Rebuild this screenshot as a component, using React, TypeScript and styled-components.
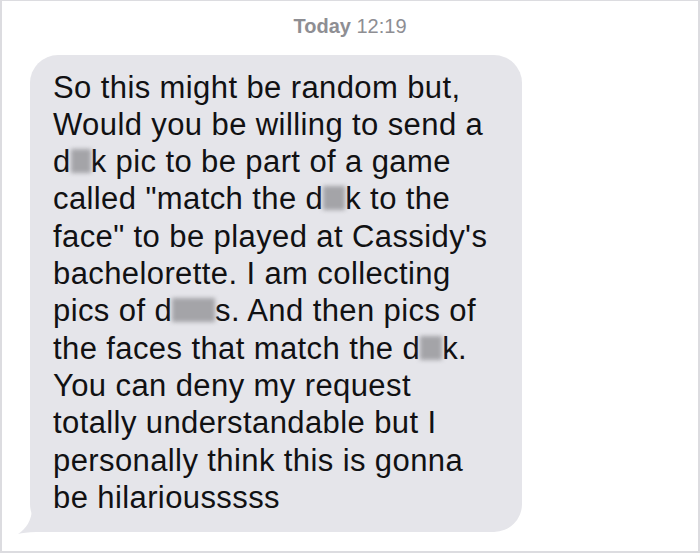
import styled, { createGlobalStyle } from 'styled-components'

const GlobalStyle = createGlobalStyle`
  html, body {
    margin: 0;
    padding: 0;
    background: #ffffff;
  }
`

const Frame = styled.div`
  box-sizing: border-box;
  width: 700px;
  height: 553px;
  border: 2px solid #dcdce0;
  border-top-width: 1px;
  background: #ffffff;
  font-family: "Liberation Sans", Arial, sans-serif;
  display: flex;
  flex-direction: column;
  padding: 14px 0 0 28px;
  overflow: hidden;
`

const Stamp = styled.div`
  width: 640px;
  text-align: center;
  color: #8e8e93;
  font-size: 20px;
  line-height: 22px;
  margin-bottom: 18px;
`

const Day = styled.span`
  font-weight: 700;
`

const Bubble = styled.div`
  position: relative;
  width: 492px;
  box-sizing: border-box;
  padding: 13.6px 0 16px 23px;
  background: #e5e5ea;
  border-radius: 28px;
  color: #111113;
  font-size: 31px;
  letter-spacing: 0.4px;
  line-height: 37.3px;
`

const Line = styled.div`
  white-space: nowrap;
`

const Blur = styled.span<{ $w: number }>`
  display: inline-block;
  width: ${p => p.$w}px;
  height: 24px;
  vertical-align: -1px;
  background: #a4a4a8;
  filter: blur(2px);
`

const Tail = styled.svg`
  position: absolute;
  left: -12px;
  bottom: -2px;
`

export default function App() {
  return (
    <>
      <GlobalStyle />
      <Frame>
        <Stamp>
          <Day>Today</Day> 12:19
        </Stamp>
        <Bubble>
          <Line>So this might be random but,</Line>
          <Line>Would you be willing to send a</Line>
          <Line>d<Blur $w={20} />k pic to be part of a game</Line>
          <Line>called "match the d<Blur $w={22} />k to the</Line>
          <Line>face" to be played at Cassidy's</Line>
          <Line>bachelorette. I am collecting</Line>
          <Line>pics of d<Blur $w={43} />s. And then pics of</Line>
          <Line>the faces that match the d<Blur $w={22} />k.</Line>
          <Line>You can deny my request</Line>
          <Line>totally understandable but I</Line>
          <Line>personally think this is gonna</Line>
          <Line>be hilariousssss</Line>
          <Tail width="40" height="26" viewBox="0 0 40 26">
            <path d="M40 0 L40 24 L18 24 C10 24 4 25 0 26 C8 21 14 12 14 0 Z" fill="#e5e5ea" />
          </Tail>
        </Bubble>
      </Frame>
    </>
  )
}
